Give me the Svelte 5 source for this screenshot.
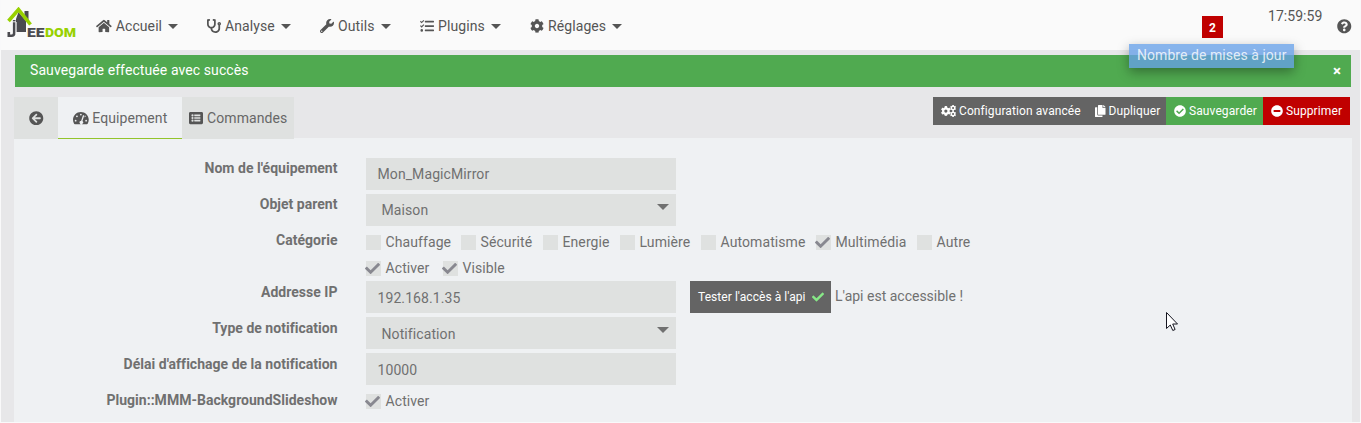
<script>
  const CHECK = 'M173.898 439.404l-166.4-166.4c-9.997-9.997-9.997-26.206 0-36.204l36.203-36.204c9.997-9.998 26.207-9.998 36.204 0L192 312.69 432.095 72.596c9.997-9.997 26.207-9.997 36.204 0l36.203 36.204c9.997 9.997 9.997 26.206 0 36.204l-294.4 294.401c-9.998 9.997-26.207 9.997-36.204-.001z';
  const COG = 'M487.4 315.7l-42.6-24.6c4.3-23.2 4.3-47 0-70.2l42.6-24.6c4.9-2.8 7.1-8.6 5.5-14-11.1-35.6-30-67.8-54.7-94.6-3.8-4.1-10-5.1-14.8-2.3L380.8 110c-17.9-15.4-38.5-27.3-60.8-35.1V25.8c0-5.6-3.9-10.5-9.4-11.7-36.7-8.2-74.3-7.8-109.2 0-5.5 1.2-9.4 6.1-9.4 11.7V75c-22.2 7.9-42.8 19.8-60.8 35.1L88.7 85.5c-4.9-2.8-11-1.9-14.8 2.3-24.7 26.7-43.6 58.9-54.7 94.6-1.7 5.4.6 11.2 5.5 14L67.3 221c-4.3 23.2-4.3 47 0 70.2l-42.6 24.6c-4.9 2.8-7.1 8.6-5.5 14 11.1 35.6 30 67.8 54.7 94.6 3.8 4.1 10 5.1 14.8 2.3l42.6-24.6c17.9 15.4 38.5 27.3 60.8 35.1v49.2c0 5.6 3.9 10.5 9.4 11.7 36.7 8.2 74.3 7.8 109.2 0 5.5-1.2 9.4-6.1 9.4-11.7v-49.2c22.2-7.9 42.8-19.8 60.8-35.1l42.6 24.6c4.9 2.8 11 1.9 14.8-2.3 24.7-26.7 43.6-58.9 54.7-94.6 1.5-5.5-.7-11.3-5.6-14.1zM256 336c-44.1 0-80-35.9-80-80s35.9-80 80-80 80 35.9 80 80-35.9 80-80 80z';
  const icons = {
    home: [576, 'M280.37 148.26L96 300.11V464a16 16 0 0 0 16 16l112.06-.29a16 16 0 0 0 15.92-16V368a16 16 0 0 1 16-16h64a16 16 0 0 1 16 16v95.64a16 16 0 0 0 16 16.05L464 480a16 16 0 0 0 16-16V300L295.67 148.26a12.19 12.19 0 0 0-15.3 0zM571.6 251.47L488 182.56V44.05a12 12 0 0 0-12-12h-56a12 12 0 0 0-12 12v72.61L318.47 43a48 48 0 0 0-61 0L4.34 251.47a12 12 0 0 0-1.6 16.9l25.5 31A12 12 0 0 0 45.15 301l235.22-193.74a12.19 12.19 0 0 1 15.3 0L530.9 301a12 12 0 0 0 16.9-1.6l25.5-31a12 12 0 0 0-1.7-16.93z'],
    stethoscope: [512, 'M447.1 112c-34.2.5-62.3 28.4-63 62.6-.5 24.3 12.5 45.6 32 56.8V344c0 57.3-50.2 104-112 104-60 0-109.2-44.1-111.9-99.2C265 333.8 320 269.2 320 192V36.6c0-11.4-8.1-21.3-19.3-23.5L237.8.5c-13-2.6-25.6 5.8-28.2 18.8L206.4 35c-2.6 13 5.8 25.6 18.8 28.2l30.7 6.1v121.4c0 52.9-42.2 96.7-95.1 97.2-53.4.5-96.9-42.7-96.9-96V69.4l30.7-6.1c13-2.6 21.4-15.2 18.8-28.2l-3.1-15.7C107.7 6.4 95.1-2 82.1.6L19.3 13C8.1 15.3 0 25.1 0 36.6V192c0 77.3 55.1 142 128.1 156.8C130.7 439.2 208.6 512 304 512c97 0 176-75.4 176-168V231.4c19.1-11.1 32-31.7 32-55.4 0-35.7-29.2-64.5-64.9-64zm.9 80c-8.8 0-16-7.2-16-16s7.2-16 16-16 16 7.2 16 16-7.2 16-16 16z'],
    wrench: [512, 'M507.73 109.1c-2.24-9.03-13.54-12.09-20.12-5.51l-74.36 74.36-67.88-11.31-11.31-67.88 74.36-74.36c6.62-6.62 3.43-17.9-5.66-20.16-47.38-11.74-99.55.91-136.58 37.93-39.64 39.64-50.55 97.1-34.05 147.2L18.74 402.76c-24.99 24.99-24.99 65.51 0 90.5 24.99 24.99 65.51 24.99 90.5 0l213.21-213.21c50.12 16.71 107.47 5.68 147.37-34.22 37.07-37.07 49.7-89.32 37.91-136.73zM64 472c-13.25 0-24-10.75-24-24 0-13.26 10.75-24 24-24s24 10.74 24 24c0 13.25-10.75 24-24 24z'],
    tasks: [512, 'M192 64h304a16 16 0 0 1 16 16v32a16 16 0 0 1-16 16H192a16 16 0 0 1-16-16V80a16 16 0 0 1 16-16zM192 224h304a16 16 0 0 1 16 16v32a16 16 0 0 1-16 16H192a16 16 0 0 1-16-16v-32a16 16 0 0 1 16-16zM192 384h304a16 16 0 0 1 16 16v32a16 16 0 0 1-16 16H192a16 16 0 0 1-16-16v-32a16 16 0 0 1 16-16zM0 96l28-28 32 31 68-67 28 28-96 97zM0 256l28-28 32 31 68-67 28 28-96 97zM64 368a48 48 0 1 0 0 96 48 48 0 0 0 0-96z'],
    cog: [512, COG],
    help: [512, 'M504 256c0 136.997-111.043 248-248 248S8 392.997 8 256C8 119.083 119.043 8 256 8s248 111.083 248 248zM262.655 90c-54.497 0-89.255 22.957-116.549 63.758-3.536 5.286-2.353 12.415 2.715 16.258l34.699 26.31c5.205 3.947 12.621 3.008 16.665-2.122 17.864-22.658 30.113-35.797 57.303-35.797 20.429 0 45.698 13.148 45.698 32.958 0 14.976-12.363 22.667-32.534 33.976C247.128 238.528 216 254.941 216 296v4c0 6.627 5.373 12 12 12h56c6.627 0 12-5.373 12-12v-1.333c0-28.462 83.186-29.647 83.186-106.667 0-58.002-60.165-102-116.531-102zM256 338c-25.365 0-46 20.635-46 46 0 25.364 20.635 46 46 46s46-20.636 46-46c0-25.365-20.635-46-46-46z'],
    back: [512, 'M256 504C119 504 8 393 8 256S119 8 256 8s248 111 248 248-111 248-248 248zm28.9-143.6L209.4 288H392c13.3 0 24-10.7 24-24v-16c0-13.3-10.7-24-24-24H209.4l75.5-72.4c9.7-9.3 9.9-24.8.4-34.3l-11-10.9c-9.4-9.4-24.6-9.4-33.9 0L107.7 239c-9.4 9.4-9.4 24.6 0 33.9l132.7 132.7c9.4 9.4 24.6 9.4 33.9 0l11-10.9c9.5-9.5 9.3-25-.4-34.3z'],
    gauge: [576, 'M288 32C129 32 0 161 0 320c0 53 14 102 39 145 6 10 16 15 28 15h442c12 0 22-5 28-15 25-43 39-92 39-145C576 161 447 32 288 32zM288 96a32 32 0 1 1 0 64 32 32 0 0 1 0-64zM96 384a32 32 0 1 1 0-64 32 32 0 0 1 0 64zM144 224a32 32 0 1 1 0-64 32 32 0 0 1 0 64zM391 152c12 4 19 18 15 30l-61 184a64 64 0 1 1-46-14l61-185c4-12 18-19 31-15zM435 160a32 32 0 1 1-4 64 34 34 0 0 1-13-3l16-51zM480 384a32 32 0 1 1 0-64 32 32 0 0 1 0 64z'],
    list: [512, 'M464 480H48c-26.51 0-48-21.49-48-48V80c0-26.51 21.49-48 48-48h416c26.51 0 48 21.49 48 48v352c0 26.51-21.49 48-48 48zM128 120a40 40 0 1 0 0 80 40 40 0 0 0 0-80zM128 216a40 40 0 1 0 0 80 40 40 0 0 0 0-80zM128 312a40 40 0 1 0 0 80 40 40 0 0 0 0-80zM204 132c-7 0-12 5-12 12v32c0 7 5 12 12 12h200c7 0 12-5 12-12v-32c0-7-5-12-12-12zM204 228c-7 0-12 5-12 12v32c0 7 5 12 12 12h200c7 0 12-5 12-12v-32c0-7-5-12-12-12zM204 324c-7 0-12 5-12 12v32c0 7 5 12 12 12h200c7 0 12-5 12-12v-32c0-7-5-12-12-12z'],
    copy: [448, 'M320 448v40c0 13.255-10.745 24-24 24H24c-13.255 0-24-10.745-24-24V120c0-13.255 10.745-24 24-24h72v296c0 30.879 25.121 56 56 56h168zm0-344V0H152c-13.255 0-24 10.745-24 24v368c0 13.255 10.745 24 24 24h272c13.255 0 24-10.745 24-24V128H344c-13.2 0-24-10.8-24-24zm120.971-31.029L375.029 7.029A24 24 0 0 0 358.059 0H352v96h96v-6.059a24 24 0 0 0-7.029-16.97z'],
    ok: [512, 'M504 256c0 136.967-111.033 248-248 248S8 392.967 8 256 119.033 8 256 8s248 111.033 248 248zM227.314 387.314l184-184c6.248-6.248 6.248-16.379 0-22.627l-22.627-22.627c-6.248-6.249-16.379-6.249-22.628 0L216 308.118l-70.059-70.059c-6.248-6.248-16.379-6.248-22.628 0l-22.627 22.627c-6.248 6.248-6.248 16.379 0 22.627l104 104c6.249 6.249 16.379 6.249 22.628.001z'],
    minus: [512, 'M256 8C119 8 8 119 8 256s111 248 248 248 248-111 248-248S393 8 256 8zM124 296c-6.6 0-12-5.4-12-12v-56c0-6.6 5.4-12 12-12h264c6.6 0 12 5.4 12 12v56c0 6.6-5.4 12-12 12H124z'],
    check: [512, CHECK]
  };
  const menu = [
    { label: 'Accueil', icon: 'home', width: 111 },
    { label: 'Analyse', icon: 'stethoscope', width: 113 },
    { label: 'Outils', icon: 'wrench', width: 100 },
    { label: 'Plugins', icon: 'tasks', width: 110 },
    { label: 'Réglages', icon: 'cog', width: 100 }
  ];
  const categories = [
    { label: 'Chauffage', width: 95 },
    { label: 'Sécurité', width: 82 },
    { label: 'Energie', width: 77 },
    { label: 'Lumière', width: 81 },
    { label: 'Automatisme', width: 115 },
    { label: 'Multimédia', width: 101, on: true },
    { label: 'Autre', width: 60 }
  ];
</script>

{#snippet icon(name, size)}
  <svg class="icon" width={(icons[name][0] / 512) * size} height={size} viewBox="0 0 {icons[name][0]} 512">
    <path d={icons[name][1]} fill="currentColor" fill-rule="evenodd" />
  </svg>
{/snippet}

{#snippet box(label, on, width)}
  <label class="check" style:width="{width}px">
    <span class="square">{#if on}{@render icon('check', 15)}{/if}</span>{label}
  </label>
{/snippet}

<div class="page">
  <header>
    <svg class="logo" width="72" height="32" viewBox="0 0 72 32">
      <path d="M17.5 4h4v12l-4-4z" fill="#4b4b50" />
      <path d="M11.5 5 19 14v11H9V12z" fill="#4b4b50" />
      <path d="M7.200 13v13q0 2.800-2.700 2.800H1.800V25" fill="none" stroke="#4b4b50" stroke-width="2.600" />
      <path d="M9.200 15v12M5.500 14.800h3.500" fill="none" stroke="#fafafa" stroke-width=".9" />
      <path d="M1.500 14 11.500 2.500 23.500 17.500" fill="none" stroke="#98d100" stroke-width="3.600" />
      <text x="20" y="30" textLength="17.5" lengthAdjust="spacingAndGlyphs" fill="#4b4b50">EE</text>
      <text x="38" y="30" textLength="31" lengthAdjust="spacingAndGlyphs" fill="#98d100">DOM</text>
    </svg>
    <nav>
      {#each menu as item}
        <a style:width="{item.width}px">{@render icon(item.icon, 14)}<span>{item.label}</span><i class="caret"></i></a>
      {/each}
    </nav>
    <div class="updates"><b>2</b></div>
    <time>17:59:59</time>
    <div class="help">{@render icon('help', 14.5)}</div>
  </header>
  <div class="tip">Nombre de mises à jour</div>

  <div class="alert"><span>Sauvegarde effectuée avec succès</span><b>×</b></div>

  <div class="toolbar">
    <div class="tabs">
      <div class="tab back">{@render icon('back', 14.5)}</div>
      <div class="tab active">{@render icon('gauge', 14)}<span>Equipement</span></div>
      <div class="tab cmds">{@render icon('list', 14)}<span>Commandes</span></div>
    </div>
    <div class="actions">
      <button class="conf">
        <svg class="icon" width="15" height="12" viewBox="0 0 640 512" fill="currentColor" fill-rule="evenodd">
          <path d={COG} transform="translate(-10 40) scale(.85)" />
          <path d={COG} transform="translate(382 -8) scale(.52)" />
          <path d={COG} transform="translate(382 254) scale(.52)" />
        </svg><span>Configuration avancée</span>
      </button>
      <button class="dup">{@render icon('copy', 12)}<span>Dupliquer</span></button>
      <button class="save">{@render icon('ok', 12)}<span>Sauvegarder</span></button>
      <button class="del">{@render icon('minus', 12)}<span>Supprimer</span></button>
    </div>
  </div>

  <main>
    <div class="row"><strong>Nom de l'équipement</strong><div class="field">Mon_MagicMirror</div></div>
    <div class="row"><strong>Objet parent</strong><div class="field select">Maison<i class="caret"></i></div></div>
    <div class="row cat">
      <strong>Catégorie</strong>
      <div class="checks">{#each categories as c}{@render box(c.label, c.on, c.width)}{/each}</div>
    </div>
    <div class="row flags">
      <strong></strong>
      <div class="checks">{@render box('Activer', true, 77)}{@render box('Visible', true, 70)}</div>
    </div>
    <div class="row low">
      <strong>Addresse IP</strong><div class="field">192.168.1.35</div>
      <button class="test"><span>Tester l'accès à l'api</span>{@render icon('check', 12)}</button>
      <span class="result">L'api est accessible !</span>
    </div>
    <div class="row low"><strong>Type de notification</strong><div class="field select">Notification<i class="caret"></i></div></div>
    <div class="row low"><strong>Délai d'affichage de la notification</strong><div class="field">10000</div></div>
    <div class="row low">
      <strong>Plugin::MMM-BackgroundSlideshow</strong>
      <div class="checks">{@render box('Activer', true, 77)}</div>
    </div>
  </main>
  <svg class="cursor" width="13" height="20" viewBox="0 0 13 20">
    <path d="M.5.500v16l3.800-3.500 2.500 5.500 2.300-1-2.400-5.500h4.800z" fill="#fff" stroke="#15151f" />
  </svg>
</div>

<style>
  :global(body) { margin: 0; }
  .page {
    box-sizing: border-box; position: relative; width: 1361px; height: 423px; overflow: hidden;
    background: #e7e7e9; border: solid #f9f9fa; border-width: 0 1px 1px;
    font: 14px/20px Roboto, sans-serif; letter-spacing: .09px; color: #676767;
  }
  .icon { display: block; flex: none; }
  header { display: flex; height: 50px; background: #fafafa; color: #555; }
  .logo { margin: 7px 0 0 6px; flex: none; }
  .logo text { font: 900 13.5px Roboto, sans-serif; letter-spacing: 0; }
  nav { display: flex; width: 1123px; padding-left: 17px; box-sizing: border-box; }
  nav a { display: flex; align-items: center; height: 52px; gap: 4px; flex: none; }
  .caret { border: solid transparent; border-width: 5px 5px 0; border-top-color: currentColor; margin-left: 2px; }
  .updates b {
    display: block; width: 21px; height: 22px; margin-top: 16px; background: #c00000; color: #fff;
    font: 700 12px/25px Roboto, sans-serif; text-align: center; letter-spacing: 0;
  }
  time { width: 55px; margin: 6px 0 0 45px; letter-spacing: .05px; }
  .help { margin: 19px 0 0 14px; }
  .tip {
    position: absolute; left: 1128px; top: 44px; width: 165px; height: 24px; box-sizing: border-box;
    padding-left: 8px; line-height: 23px; letter-spacing: .05px; color: rgba(255,255,255,.8); white-space: nowrap;
    background: rgba(102,160,232,.78); box-shadow: 0 4px 12px rgba(0,0,0,.35);
  }
  .alert {
    display: flex; justify-content: space-between; height: 32px; margin: 5px 9px 0 14px;
    box-sizing: border-box; padding: 5px 10px 0 15px; background: #50aa50; color: #fff;
  }
  .alert b { font-size: 15px; line-height: 22px; letter-spacing: 0; }
  .toolbar { display: flex; justify-content: space-between; height: 41px; margin: 10px 10px 0 13px; }
  .tabs { display: flex; height: 42px; position: relative; }
  .tab { display: flex; align-items: center; gap: 4px; box-sizing: border-box; background: #dfe1e0; color: #555; }
  .tab span { color: #676767; }
  .back { width: 44px; padding-left: 15px; }
  .active { width: 124px; padding: 1px 0 0 15px; gap: 3.5px; background: #eff1f3; border-bottom: 1px solid #93c42c; }
  .cmds { width: 112px; padding-left: 7px; }
  button {
    display: flex; align-items: center; gap: 3px; margin: 0; padding: 0 0 0 8px; border: 0;
    font: 12px/28px Roboto, sans-serif; letter-spacing: .1px; color: #fff; white-space: nowrap;
  }
  .actions { display: flex; height: 28px; }
  .conf { width: 154px; background: #646464; }
  .dup { width: 79px; background: #646464; }
  .save { width: 97px; background: #50aa50; }
  .del { width: 87px; background: #c00000; }
  main { height: 284px; margin: 0 8px 0 13px; padding-top: 20px; box-sizing: border-box; background: #eff1f3; color: #707070; }
  .row { display: flex; height: 36px; }
  strong { width: 323.5px; margin-right: 28.5px; text-align: right; font-weight: 700; flex: none; letter-spacing: .02px; }
  .field { width: 310px; height: 32px; box-sizing: border-box; padding: 6px 11.5px 0; background: #dfe1e0; flex: none; }
  .select { padding-left: 15.5px; display: flex; justify-content: space-between; }
  .select .caret { height: 0; margin-top: 4px; margin-right: -4px; border-width: 6px 6px 0; }
  .low strong { padding-top: 1px; }
  .low .field { padding-top: 7px; }
  .low .caret { margin-top: 3px; }
  .cat { height: 26px; }
  .flags { height: 25px; }
  .checks { display: flex; padding-top: 2px; }
  .check { display: flex; gap: 4.5px; flex: none; white-space: nowrap; }
  .square { width: 15px; height: 15px; margin-top: 3px; background: #dfe1e0; color: #888890; flex: none; }
  .square .icon { margin-left: -.7px; }
  .test { width: 141px; height: 32px; margin-left: 14px; line-height: 33px; background: #646464; gap: 6px; letter-spacing: .06px; }
  .test span { padding-top: 1px; }
  .test .icon { color: #87e887; }
  .result { margin-left: 4px; padding-top: 5px; letter-spacing: 0; }
  .cursor { position: absolute; left: 1165px; top: 312px; }
</style>
